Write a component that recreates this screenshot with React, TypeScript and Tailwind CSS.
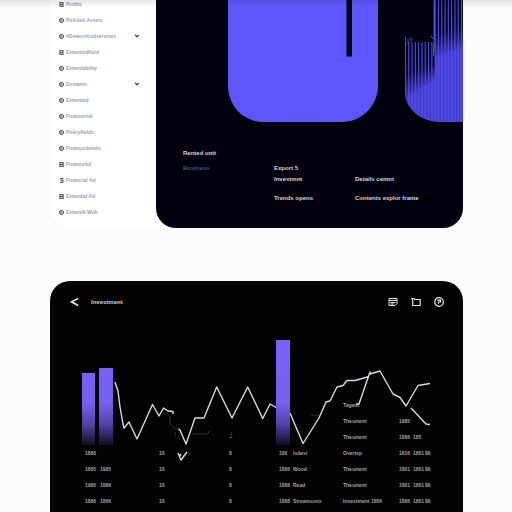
import React from 'react';
import { ChevronDown } from 'lucide-react';

interface NavItem {
  label: string;
  glyph: string;
  expandable?: boolean;
}

const navItems: NavItem[] = [
  { label: 'Profits', glyph: '8' },
  { label: 'Policied Assets', glyph: 'o' },
  { label: '#Downsfoodservices', glyph: 'o', expandable: true },
  { label: 'Extendedfield', glyph: '8' },
  { label: 'Extendability', glyph: 'o' },
  { label: 'Domains', glyph: 'o', expandable: true },
  { label: 'Extended', glyph: 'o' },
  { label: 'Financerial', glyph: 'o' },
  { label: 'Policyfields', glyph: 'o' },
  { label: 'Financedetails', glyph: 'o' },
  { label: 'Financefid', glyph: 'B' },
  { label: 'Financial Ad', glyph: '3' },
  { label: 'Extendat Ad', glyph: 'B' },
  { label: 'Extendit Web', glyph: 'o' },
];

// one entry per column, empty string keeps the cell blank
const tableRows: string[][] = [
  ['', '', '', '', '', '', 'Tagent', '', '', ''],
  ['', '', '', '', '', '', 'Thesment', '1985', '', ''],
  ['', '', '', '–', '', '', 'Thesment', '1866', '185', ''],
  ['1886', '', '10', '8', '180', 'Isdest', 'Overtop', '1816', '1861', '$6'],
  ['1885', '1985', '10', '8', '1886', 'Wood', 'Thesment', '1801', '1861', '$6'],
  ['1986', '1986', '10', '8', '1888', 'Read', 'Thesment', '1801', '1861', '$6'],
  ['1886', '1866', '10', '8', '1888', 'Streamsons', 'Investment 1886', '1886', '1861', '$6'],
];

const bars = [
  { x: 82, y: 373, width: 13 },
  { x: 99, y: 368, width: 14 },
  { x: 276, y: 340, width: 14 },
];

const stripes = Array.from({ length: 18 }, (_, i) => 406 + i * 3.3);

const NavGlyph = ({ glyph }: { glyph: string }) => (
  <svg viewBox="0 0 6 6" className="size-[5px] shrink-0 text-gray-500" fill="none" stroke="currentColor" strokeWidth="1.6">
    {glyph === 'o' && (
      <>
        <circle cx="3" cy="3" r="2.3" />
        <path d="M2 3h2" />
      </>
    )}
    {glyph === '8' && <path d="M1.2.8h3.6v4.4H1.2zM1.2 3h3.6" />}
    {glyph === 'B' && <path d="M1 .8h4v4.4H1zM1 3h3.5" />}
    {glyph === '3' && <path d="M1 .8h3.4L3 2.8h1.6v2.4H1" />}
  </svg>
);

const Sidebar = () => (
  <nav className="-mt-1 w-[106px] shrink-0 pr-4 pb-2 pl-[9px]">
    {navItems.map((item) => (
      <a key={item.label} href="#" className="flex h-4 items-center gap-[2px] text-[5px] leading-4 font-bold text-gray-400">
        <NavGlyph glyph={item.glyph} />
        <span className="whitespace-nowrap">{item.label}</span>
        {item.expandable && <ChevronDown size={6} strokeWidth={5} className="ml-auto shrink-0 text-gray-700" />}
      </a>
    ))}
  </nav>
);

const HeroArt = () => (
  <svg viewBox="156 0 307 122" preserveAspectRatio="none" className="block h-[122px] w-full">
    <defs>
      <linearGradient id="ribFade" x1="0" y1="0" x2="0" y2="1">
        <stop offset="0" stopColor="#02010f" />
        <stop offset="0.6" stopColor="#02010f" stopOpacity="0.85" />
        <stop offset="1" stopColor="#02010f" stopOpacity="0.1" />
      </linearGradient>
      <clipPath id="cupClip">
        <path d="M405 0V92C405 108 420 122 440 122H463V0Z" />
      </clipPath>
    </defs>
    <path d="M228 0V85C228 106 243 122 264 122H342C361 122 378 106 378 86V0Z" fill="#5d57fb" />
    <path d="M346.5 0H352V56.500H346.500Z" fill="#02010f" />
    <g clipPath="url(#cupClip)">
      <path d="M405 42H434V0H463V122H405Z" fill="#4f49e4" />
      {/* soft ribs over the whole cup */}
      {stripes.map((x) => (
        <path key={x} d={`M${x + 1.2} 0V122`} stroke="#3832b4" strokeWidth="1.1" opacity="0.6" />
      ))}
      {/* deep ribs, shorter towards the right edge */}
      {stripes.map((x, i) => (
        <rect
          key={x}
          x={x}
          y={x < 433 ? 40 : 0}
          width="2.2"
          height={x < 433 ? 58 - i * 2.2 : 57 - (i - 9) * 1.2}
          fill="url(#ribFade)"
        />
      ))}
      <path d="M405 0H434V42H427L425 40L422 42L415 41L412 37L409 41L405 37Z" fill="#02010f" />
      <path d="M405.500 37V46M408 39V44M411 37V42M431 36L433 39M433.500 44V56" stroke="#6f6bd8" strokeWidth="0.7" />
      <path d="M434 0V52" stroke="#5651cf" strokeWidth="1" />
    </g>
  </svg>
);

const Hero = () => (
  <section className="min-w-0 flex-1 overflow-hidden rounded-b-[20px] bg-[#02010f]">
    <HeroArt />
    <div className="grid grid-cols-[91px_81px_1fr] pt-[26px] pb-6 pl-[27px] text-[6px] leading-[11px] font-bold whitespace-nowrap text-gray-300">
      <div>
        <h2>Rented unit</h2>
        <p className="mt-1 text-gray-600">Business</p>
      </div>
      <div className="pt-[15px]">
        <p>Export 5</p>
        <p>Investmnt</p>
        <p className="mt-2">Trends opens</p>
      </div>
      <div className="pt-[26px]">
        <p>Details cemnt</p>
        <p className="mt-2">Contents explor frame</p>
      </div>
    </div>
  </section>
);

const Chart = () => (
  <svg viewBox="50 307 413 205" preserveAspectRatio="none" className="pointer-events-none absolute inset-x-0 top-0 h-[205px] w-full" fill="none">
    <defs>
      <linearGradient id="barFade" x1="0" y1="340" x2="0" y2="446" gradientUnits="userSpaceOnUse">
        <stop offset="0" stopColor="#7a63fb" />
        <stop offset="0.6" stopColor="#7560f0" />
        <stop offset="0.8" stopColor="#4f42a4" />
        <stop offset="1" stopColor="#0d0a1c" />
      </linearGradient>
    </defs>
    <g stroke="#d8d8e0" strokeWidth="1.4" strokeLinejoin="round">
      <path d="M115 382L118 391L120 407L123 424L124 428L129 422L137 439L152.500 404.500L159 416L163.500 408L168 411L173 411.500V414" />
      <path d="M178 429L180 430L186 444L195 418H204L216.700 387L232 418L247.700 387L262.700 418.500L270 404L277 408" />
      <path d="M290 413L303 443.500L319 418L326 402L330 401L337 387L343 385.500L347 380.500L355 380.500L369 376.500" />
      <path d="M356 404H359L370 372V374L380 371L393 394L400 397.500L406 406L418 385.500L430 383.500" />
      <path d="M411 408L426 424L430 424.500" />
      <path d="M178 453L181 460L187 452M179 457L181 454" />
    </g>
    <g stroke="#36363c" strokeWidth="0.9">
      <path d="M170 416V424L174 428L179 429.500M175 432V436M192 434H208L209 431M188 456L191 453M311 415H319M231 437L232 432" />
    </g>
    {bars.map((bar) => (
      <rect key={bar.x} x={bar.x} y={bar.y} width={bar.width} height={445 - bar.y} fill="url(#barFade)" />
    ))}
  </svg>
);

const DataTable = () => (
  <table className="ml-[35px] w-[calc(100%-35px)] table-fixed text-left text-[5px] leading-4 font-bold text-neutral-400">
    <colgroup>
      <col className="w-[15px]" />
      <col className="w-[59px]" />
      <col className="w-[70px]" />
      <col className="w-[50px]" />
      <col className="w-[14px]" />
      <col className="w-[50px]" />
      <col className="w-[56px]" />
      <col className="w-[14px]" />
      <col className="w-[12px]" />
      <col className="w-[38px]" />
    </colgroup>
    <tbody>
      {tableRows.map((row, rowIdx) => (
        <tr key={rowIdx} className="h-4">
          {row.map((cell, idx) => (
            <td key={idx} className="p-0 whitespace-nowrap">{cell}</td>
          ))}
        </tr>
      ))}
    </tbody>
  </table>
);

const ReportPanel = () => (
  <section className="flex-1 rounded-t-[20px] bg-[#030303] text-gray-200">
    <header className="flex items-center pt-4 pr-[19px] pl-5">
      <button aria-label="Back" className="h-[10px]">
        <svg viewBox="0 0 10 10" className="size-[10px]" fill="none" stroke="currentColor" strokeWidth="1.6">
          <path d="M8.200 1.500L1.500 4.800L8.200 8.500" />
        </svg>
      </button>
      <h2 className="ml-[11px] text-[6px] leading-[10px] font-bold text-gray-300">Investment</h2>
      <div className="ml-auto flex gap-[13px]">
        <button aria-label="Calendar" className="h-[10px]">
          <svg viewBox="0 0 10 10" className="size-[10px]" fill="none" stroke="currentColor" strokeWidth="1">
            <path d="M1 1.500H9V6.500L7 8.500H1ZM1 3.500H9M2.500 5.500H7.500M2.500 7H6" />
          </svg>
        </button>
        <button aria-label="Folder" className="h-[10px]">
          <svg viewBox="0 0 10 10" className="size-[10px]" fill="none" stroke="currentColor" strokeWidth="1.2">
            <path d="M1.700 8.500V3L.700 1.500H3L4 2.500H9.200V8.500Z" />
          </svg>
        </button>
        <button aria-label="Help" className="h-[10px]">
          <svg viewBox="0 0 10 10" className="size-[10px]" fill="none" stroke="currentColor" strokeWidth="1.2">
            <circle cx="5" cy="5" r="4.300" />
            <path d="M3.200 3.300L6.500 3V5H4.500V6.800" />
          </svg>
        </button>
      </div>
    </header>
    <div className="relative pt-[90px]">
      <DataTable />
      <Chart />
    </div>
  </section>
);

export default function App() {
  return (
    <main className="relative flex min-h-screen flex-col gap-[53px] overflow-hidden bg-[#fcfcfc] pr-[49px] pl-[50px] font-['Liberation_Sans',sans-serif]">
      <div className="flex rounded-b-[20px] bg-white shadow-[0_0_2px_rgba(0,0,0,0.06)]">
        <Sidebar />
        <Hero />
      </div>
      <ReportPanel />
      {/* Top edge shade */}
      <div className="pointer-events-none absolute inset-x-0 top-0 h-2 bg-linear-to-b from-black/10 to-transparent" />
    </main>
  );
}
